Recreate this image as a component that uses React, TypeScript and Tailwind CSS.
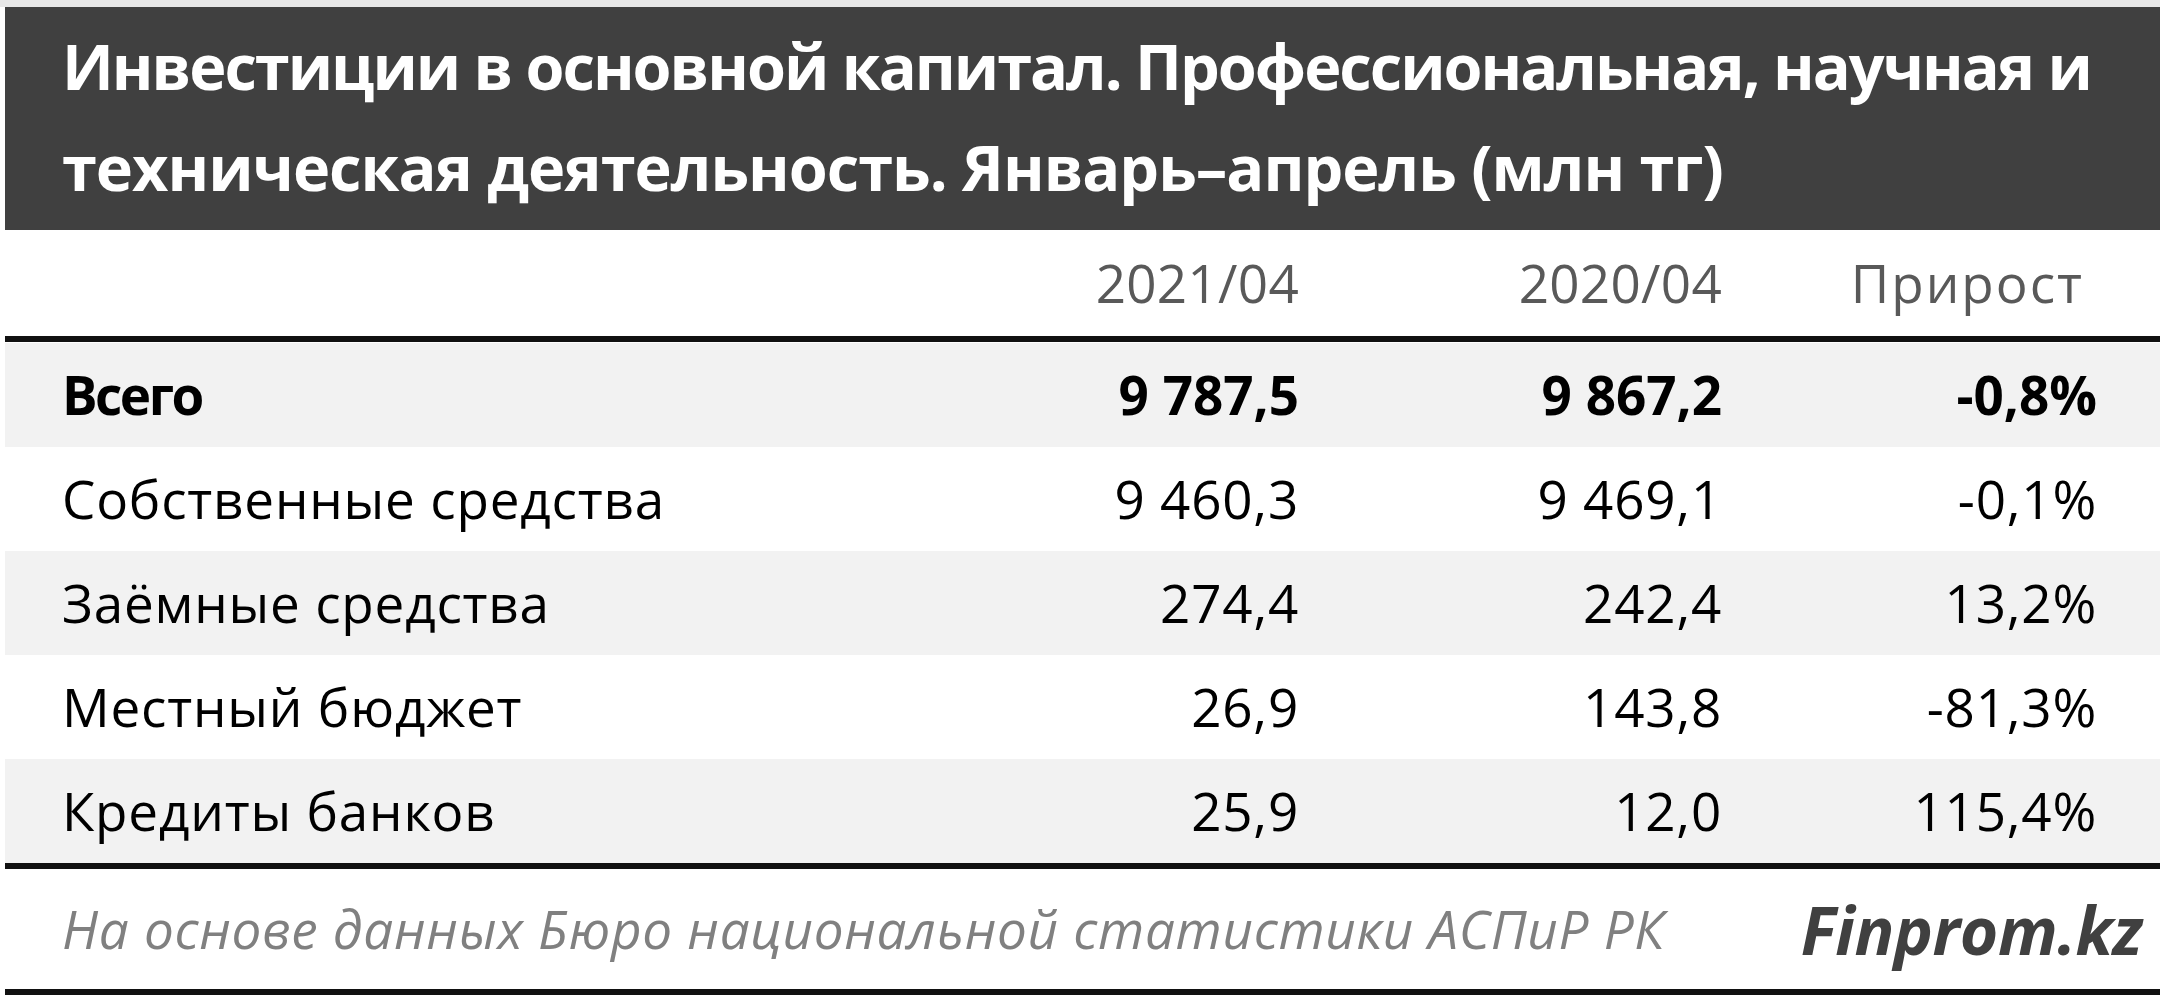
import React from "react";

type Row = {
  label: string;
  cur: string;
  prev: string;
  growth: string;
  bold?: boolean;
};

const rows: Row[] = [
  { label: "Всего", cur: "9 787,5", prev: "9 867,2", growth: "-0,8%", bold: true },
  { label: "Собственные средства", cur: "9 460,3", prev: "9 469,1", growth: "-0,1%" },
  { label: "Заёмные средства", cur: "274,4", prev: "242,4", growth: "13,2%" },
  { label: "Местный бюджет", cur: "26,9", prev: "143,8", growth: "-81,3%" },
  { label: "Кредиты банков", cur: "25,9", prev: "12,0", growth: "115,4%" },
];

const App = () => {
  return (
    <div className="w-[2160px] h-[995px] bg-white font-['Open_Sans',sans-serif] overflow-hidden">
      {/* светлая полоска сверху */}
      <div className="h-[7px] bg-[#e8e8e8]" />

      <div className="ml-[5px]">
        {/* Заголовок */}
        <div className="h-[223px] bg-[#404040] text-white font-bold text-[63px] leading-[101px] pl-[57px] pt-[8px]">
          <div className="tracking-[-2px]">Инвестиции в основной капитал. Профессиональная, научная и</div>
          <div className="tracking-[-1px]">техническая деятельность. Январь–апрель (млн тг)</div>
        </div>

        {/* Шапка таблицы */}
        <div className="h-[106px] flex items-center pl-[57px] pr-[63px] text-[53px] text-[#595959] tracking-[0.3px]">
          <div className="flex-1" />
          <div className="w-[400px] text-right">2021/04</div>
          <div className="w-[423px] text-right">2020/04</div>
          <div className="w-[375px] text-right pr-[13px] tracking-[2px]">Прирост</div>
        </div>

        <div className="h-[6px] bg-[#111]" />
        <div className="h-[1px]" />

        {/* Строки */}
        {rows.map((r, i) => (
          <div
            key={r.label}
            className={
              "h-[104px] flex items-center pl-[57px] pr-[63px] text-[53px] text-black " +
              (i % 2 === 0 ? "bg-[#f2f2f2]" : "bg-white") +
              (r.bold ? " font-bold tracking-[0px]" : " tracking-[0.8px]")
            }
          >
            <div className={r.bold ? "flex-1 tracking-[-2.5px]" : "flex-1"}>{r.label}</div>
            <div className="w-[400px] text-right">{r.cur}</div>
            <div className="w-[423px] text-right">{r.prev}</div>
            <div className="w-[375px] text-right">{r.growth}</div>
          </div>
        ))}

        <div className="h-[6px] bg-[#111]" />

        {/* Подвал */}
        <div className="h-[120px] flex items-center pl-[57px] pr-[18px]">
          <div className="flex-1 italic text-[53px] text-[#808080] tracking-[0.7px]">
            На основе данных Бюро национальной статистики АСПиР РК
          </div>
          <div className="italic font-bold text-[66px] text-[#404040] tracking-[-0.5px]">Finprom.kz</div>
        </div>

        <div className="h-[6px] bg-[#111]" />
      </div>
    </div>
  );
};

export default App;
